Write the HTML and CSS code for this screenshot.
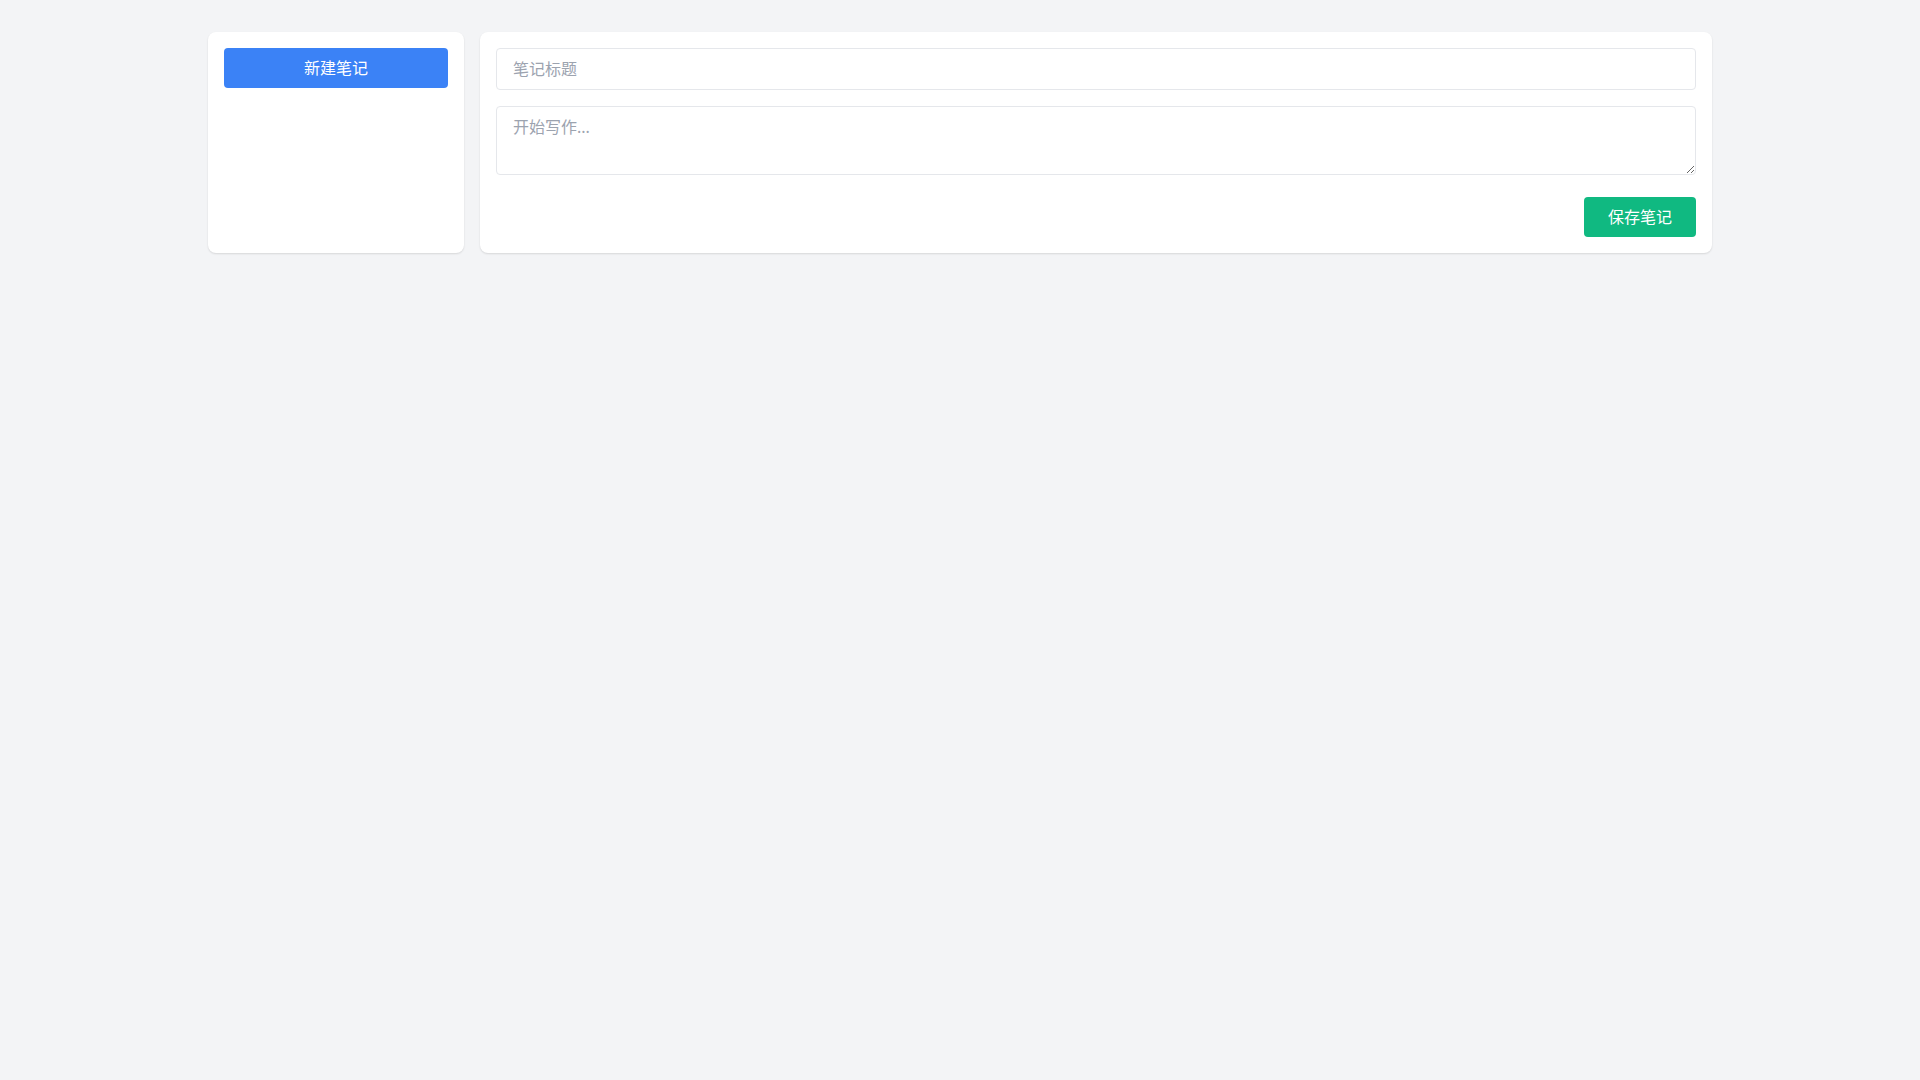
FILE: index.html
```html
<!DOCTYPE html>
<html lang="zh-CN">
<head>
<meta charset="utf-8">
<title>笔记</title>
<link rel="stylesheet" href="styles.css">
</head>
<body>
<div class="container">
  <aside class="card sidebar">
    <button class="btn btn-blue">新建笔记</button>
  </aside>
  <main class="card editor">
    <input class="field title" type="text" placeholder="笔记标题">
    <textarea class="field content" placeholder="开始写作..."></textarea>
    <div class="actions">
      <button class="btn btn-green">保存笔记</button>
    </div>
  </main>
</div>
</body>
</html>
```

FILE: styles.css
```css
* { box-sizing: border-box; }
html, body { margin: 0; padding: 0; }
body {
  background: #f3f4f6;
  font-family: "Noto Sans", "Noto Sans CJK SC", sans-serif;
  font-size: 16px;
  line-height: 24px;
  color: #111827;
}
.container {
  max-width: 1536px;
  margin: 0 auto;
  padding: 32px 16px;
  display: flex;
  gap: 16px;
  align-items: stretch;
}
.card {
  background: #ffffff;
  border-radius: 8px;
  box-shadow: 0 1px 2px rgba(0, 0, 0, 0.12);
  padding: 16px;
}
.sidebar {
  width: 256px;
  flex: none;
}
.editor {
  flex: 1;
  display: flex;
  flex-direction: column;
}
.btn {
  border: none;
  border-radius: 4px;
  color: #ffffff;
  font-family: "Noto Sans", "Noto Sans CJK SC", sans-serif;
  font-size: 16px;
  line-height: 24px;
  height: 40px;
  padding: 8px 24px;
  cursor: pointer;
}
.btn-blue {
  background: #3b82f6;
  width: 100%;
  display: block;
}
.btn-green {
  background: #10b981;
  width: 112px;
}
.field {
  display: block;
  width: 100%;
  border: 1px solid #e5e7eb;
  border-radius: 4px;
  padding: 8px 16px;
  font-family: "Noto Sans", "Noto Sans CJK SC", sans-serif;
  font-size: 16px;
  line-height: 24px;
  color: #111827;
  background: #ffffff;
  outline: none;
  margin: 0;
}
.field::placeholder { color: #9ca3af; }
.title { height: 42px; }
.content {
  height: 69px;
  margin-top: 16px;
  resize: vertical;
}
.actions {
  display: flex;
  justify-content: flex-end;
  margin-top: 22px;
}
```
